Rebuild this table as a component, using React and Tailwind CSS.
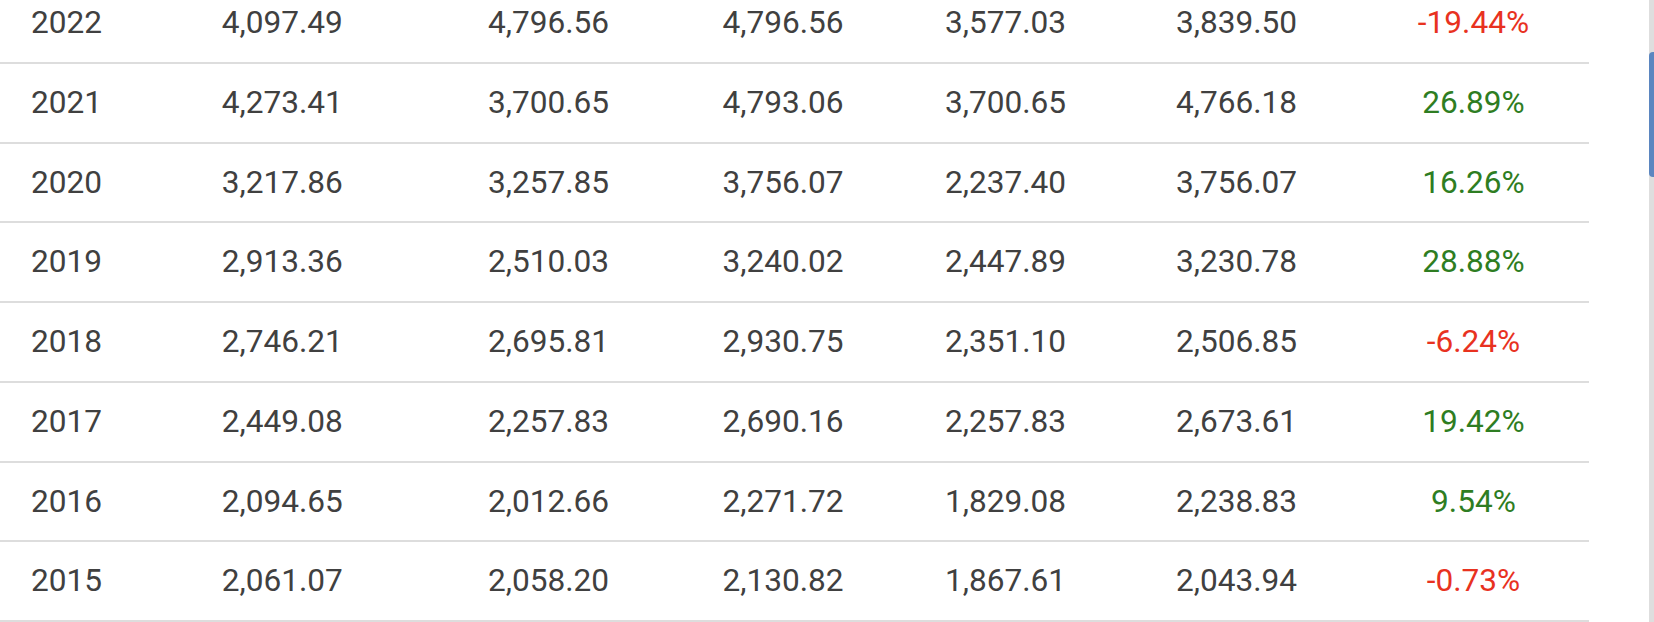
import React from 'react';

// Linhas da tabela histórica (ano, abertura, ..., variação)
const rows = [
    ['2022', '4,097.49', '4,796.56', '4,796.56', '3,577.03', '3,839.50', '-19.44%'],
    ['2021', '4,273.41', '3,700.65', '4,793.06', '3,700.65', '4,766.18', '26.89%'],
    ['2020', '3,217.86', '3,257.85', '3,756.07', '2,237.40', '3,756.07', '16.26%'],
    ['2019', '2,913.36', '2,510.03', '3,240.02', '2,447.89', '3,230.78', '28.88%'],
    ['2018', '2,746.21', '2,695.81', '2,930.75', '2,351.10', '2,506.85', '-6.24%'],
    ['2017', '2,449.08', '2,257.83', '2,690.16', '2,257.83', '2,673.61', '19.42%'],
    ['2016', '2,094.65', '2,012.66', '2,271.72', '1,829.08', '2,238.83', '9.54%'],
    ['2015', '2,061.07', '2,058.20', '2,130.82', '1,867.61', '2,043.94', '-0.73%'],
];

const Row = ({ cells }) => {
    const change = cells[6];
    const negative = change.startsWith('-');
    return (
        <div className="grid grid-cols-[190.7px_266.3px_234.5px_222.5px_231px_182px_231px] items-center pl-[31px] h-[79.71px] border-b-2 border-[#dddddd]">
            {cells.slice(0, 6).map((c, i) => (
                <div key={i} className="text-[#404040]">{c}</div>
            ))}
            <div className={negative ? 'text-center text-[#e8321f]' : 'text-center text-[#2e7d22]'}>{change}</div>
        </div>
    );
};

const App = () => {
    return (
        <div className="w-[1654px] h-[622px] overflow-hidden bg-white flex font-['Roboto',sans-serif] text-[31.6px] leading-none">
            <div className="w-[1589px] -mt-[15.7px]">
                {rows.map((r) => (
                    <Row key={r[0]} cells={r} />
                ))}
            </div>
            <div className="flex-1" />
            {/* barra de rolagem */}
            <div className="w-[5px] h-full bg-[#dedede] flex flex-col">
                <div className="mt-[52px] h-[125px] w-full bg-[#5b86c0] rounded-l-[4px]" />
            </div>
        </div>
    );
};

export default App;
